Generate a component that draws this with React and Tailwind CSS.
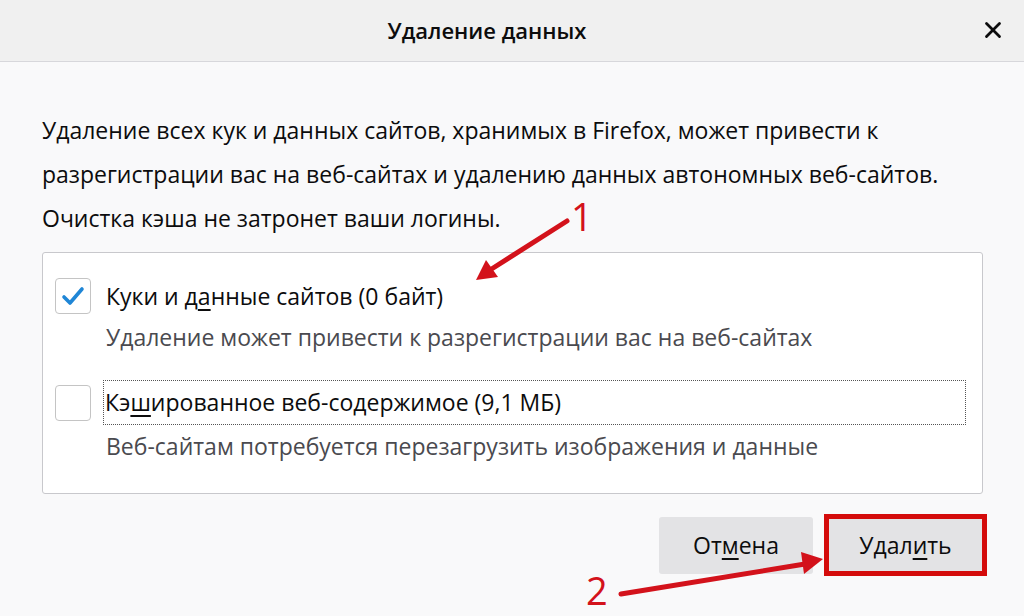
import { X } from "lucide-react";

function Checkbox({ checked }) {
  return (
    <div className="w-[36px] h-[36px] shrink-0 rounded-[4px] border border-[#c4c4c4] bg-white flex items-center justify-center">
      {checked && (
        <svg width="26" height="22" viewBox="0 0 26 22">
          <path d="M4 12 L10 18 L22 4" fill="none" stroke="#1f86d6" strokeWidth="3.6" strokeLinecap="round" strokeLinejoin="round" />
        </svg>
      )}
    </div>
  );
}

function Annotations() {
  return (
    <svg className="absolute inset-0 pointer-events-none" width="1024" height="616" viewBox="0 0 1024 616">
      <line x1="567" y1="221" x2="490" y2="270" stroke="#d3121b" strokeWidth="5" strokeLinecap="round" />
      <polygon points="476,280 486,260 498,277" fill="#d3121b" />
      <line x1="621" y1="594" x2="805" y2="564" stroke="#d3121b" strokeWidth="5" strokeLinecap="round" />
      <polygon points="823,559 801,552 804,574" fill="#d3121b" />
      <text x="571" y="231" fill="#d3121b" fontSize="38" fontFamily="'Open Sans', sans-serif">1</text>
      <text x="586" y="605" fill="#d3121b" fontSize="38" fontFamily="'Open Sans', sans-serif">2</text>
    </svg>
  );
}

export default function App() {
  return (
    <div className="relative w-[1024px] h-[616px] overflow-hidden bg-[#f9f9fa] text-[#0c0c0d] font-['Open_Sans',sans-serif]">
      <div className="h-[62px] bg-[#f0f0f0] border-b border-[#d7d7db] flex items-center justify-center relative">
        <h1 className="text-[22px] font-semibold -ml-[50px]">Удаление данных</h1>
        <button className="absolute right-[18px] top-[17px]">
          <X size={26} strokeWidth={2.6} />
        </button>
      </div>

      <div className="pl-[42px] pr-[40px] pt-[46px]">
        <p className="text-[23px] leading-[44px] whitespace-nowrap">
          Удаление всех кук и данных сайтов, хранимых в Firefox, может привести к
          <br />
          разрегистрации вас на веб-сайтах и удалению данных автономных веб-сайтов.
          <br />
          Очистка кэша не затронет ваши логины.
        </p>

        <div className="mt-[12px] w-[941px] h-[242px] bg-white border border-[#c8c8cc] rounded-[3px] pl-[12px] pr-[16px] pt-[24px]">
          <div className="flex items-center gap-[15px] h-[38px]">
            <Checkbox checked />
            <span className="text-[23px]">
              Куки и д<span className="underline underline-offset-[4px]">а</span>нные сайтов (0 байт)
            </span>
          </div>
          <div className="pl-[51px] mt-[6px] text-[23px] text-[#4a4a4f] leading-[32px]">
            Удаление может привести к разрегистрации вас на веб-сайтах
          </div>
          <div className="flex items-center gap-[14px] mt-[27px] h-[45px]">
            <Checkbox />
            <div className="flex-1 h-[45px] flex items-center border border-dotted border-[#555] pl-[1px] -ml-[2px]">
              <span className="text-[23px] whitespace-nowrap">
                Кэ<span className="underline underline-offset-[4px]">ш</span>ированное веб-содержимое (9,1 МБ)
              </span>
            </div>
          </div>
          <div className="pl-[51px] mt-[5px] text-[23px] text-[#4a4a4f] leading-[32px] whitespace-nowrap">
            Веб-сайтам потребуется перезагрузить изображения и данные
          </div>
        </div>

        <div className="flex justify-end items-center gap-[11px] mt-[20px] w-[945px]">
          <button className="w-[154px] h-[57px] bg-[#e3e3e5] rounded-[3px] text-[23px]">
            От<span className="underline underline-offset-[4px]">м</span>ена
          </button>
          <div className="w-[163px] h-[62px] border-[5px] border-[#d40b0b] bg-[#e3e3e5] flex items-center justify-center">
            <span className="text-[23px]">
              Удал<span className="underline underline-offset-[4px]">и</span>ть
            </span>
          </div>
        </div>
      </div>

      <Annotations />
    </div>
  );
}
